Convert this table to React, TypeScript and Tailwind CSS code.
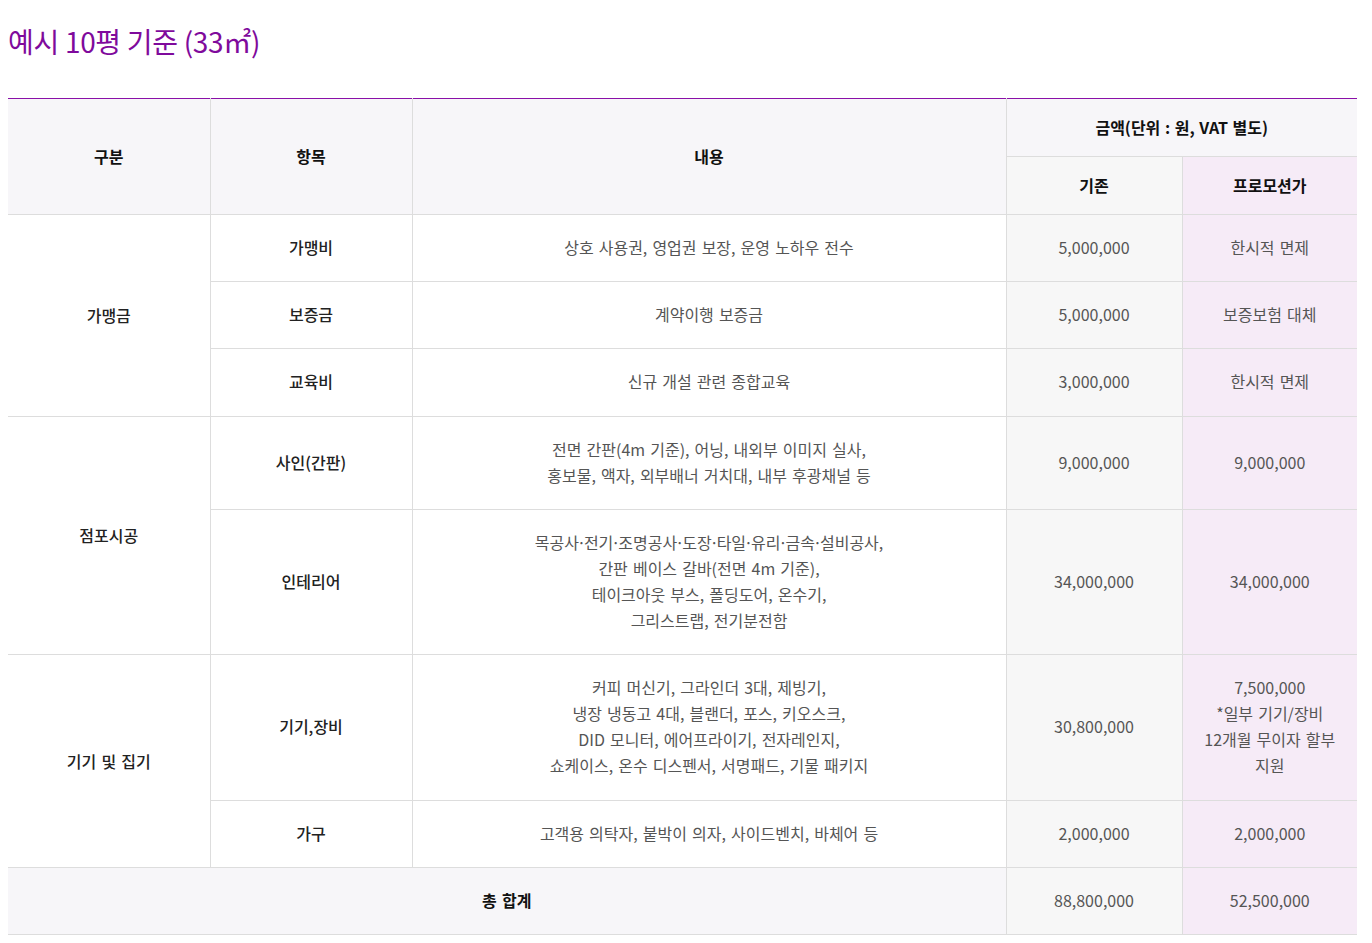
const font = { fontFamily: '"Noto Sans CJK KR", "Noto Sans", sans-serif' }

type Row = {
  group?: { label: string; span: number }
  item: string
  desc: string[]
  base: string
  promo: string[]
}

const rows: Row[] = [
  {
    group: { label: '가맹금', span: 3 },
    item: '가맹비',
    desc: ['상호 사용권, 영업권 보장, 운영 노하우 전수'],
    base: '5,000,000',
    promo: ['한시적 면제'],
  },
  {
    item: '보증금',
    desc: ['계약이행 보증금'],
    base: '5,000,000',
    promo: ['보증보험 대체'],
  },
  {
    item: '교육비',
    desc: ['신규 개설 관련 종합교육'],
    base: '3,000,000',
    promo: ['한시적 면제'],
  },
  {
    group: { label: '점포시공', span: 2 },
    item: '사인(간판)',
    desc: ['전면 간판(4m 기준), 어닝, 내외부 이미지 실사,', '홍보물, 액자, 외부배너 거치대, 내부 후광채널 등'],
    base: '9,000,000',
    promo: ['9,000,000'],
  },
  {
    item: '인테리어',
    desc: [
      '목공사·전기·조명공사·도장·타일·유리·금속·설비공사,',
      '간판 베이스 갈바(전면 4m 기준),',
      '테이크아웃 부스, 폴딩도어, 온수기,',
      '그리스트랩, 전기분전함',
    ],
    base: '34,000,000',
    promo: ['34,000,000'],
  },
  {
    group: { label: '기기 및 집기', span: 2 },
    item: '기기,장비',
    desc: [
      '커피 머신기, 그라인더 3대, 제빙기,',
      '냉장 냉동고 4대, 블랜더, 포스, 키오스크,',
      'DID 모니터, 에어프라이기, 전자레인지,',
      '쇼케이스, 온수 디스펜서, 서명패드, 기물 패키지',
    ],
    base: '30,800,000',
    promo: ['7,500,000', '*일부 기기/장비', '12개월 무이자 할부', '지원'],
  },
  {
    item: '가구',
    desc: ['고객용 의탁자, 붙박이 의자, 사이드벤치, 바체어 등'],
    base: '2,000,000',
    promo: ['2,000,000'],
  },
]

// middle dots render wide in the CJK font, pull them in a bit
const Line = ({ text }: { text: string }) => {
  const parts = text.split('·')
  return (
    <div>
      {parts.map((p, i) => (
        <span key={i}>
          {i > 0 && <span className="mx-[-2px]">·</span>}
          {p}
        </span>
      ))}
    </div>
  )
}

const Lines = ({ lines }: { lines: string[] }) => (
  <>
    {lines.map((l, i) => (
      <Line key={i} text={l} />
    ))}
  </>
)

const cell = 'border-b border-[#dddddd] pt-[19px] pb-[21.35px]'

export default function App() {
  return (
    <div className="bg-white min-h-screen" style={font}>
      <div className="ml-2 w-[1349px] pt-5">
        <h2 className="text-[28px] leading-[42px] text-[#7f0a9c] mb-9 tracking-[-0.3px]">예시 10평 기준 (33㎡)</h2>
        <table className="w-full border-collapse table-fixed text-[16px] leading-[26px] text-center border-t border-t-[#8a10a8] [word-spacing:1.5px]">
          <colgroup>
            <col className="w-[202px]" />
            <col className="w-[202px]" />
            <col className="w-[594px]" />
            <col className="w-[176px]" />
            <col className="w-[175px]" />
          </colgroup>
          <thead>
            <tr className="text-[#111] font-bold">
              <th rowSpan={2} className="bg-[#f7f6f9] border-b border-r border-[#dddddd]">구분</th>
              <th rowSpan={2} className="bg-[#f7f6f9] border-b border-r border-[#dddddd]">항목</th>
              <th rowSpan={2} className="bg-[#f7f6f9] border-b border-r border-[#dddddd]">내용</th>
              <th colSpan={2} className="bg-[#f7f6f9] border-b border-[#dddddd] h-[57.5px] [word-spacing:1px]">금액(단위 : 원, VAT 별도)</th>
            </tr>
            <tr className="text-[#111] font-bold">
              <th className="bg-[#f7f7f7] border-b border-r border-[#dddddd] h-[58px]">기존</th>
              <th className="bg-[#f6ebf7] border-b border-[#dddddd]">프로모션가</th>
            </tr>
          </thead>
          <tbody>
            {rows.map((r, i) => (
              <tr key={i}>
                {r.group && (
                  <td rowSpan={r.group.span} className="border-b border-r border-[#dddddd] text-[#222] font-medium">
                    {r.group.label}
                  </td>
                )}
                <td className={`${cell} border-r text-[#222] font-medium`}>{r.item}</td>
                <td className={`${cell} border-r text-[#555]`}>
                  <Lines lines={r.desc} />
                </td>
                <td className={`${cell} border-r text-[#555] bg-[#f7f7f7]`}>{r.base}</td>
                <td className={`${cell} text-[#555] bg-[#f6ebf7]`}>
                  <Lines lines={r.promo} />
                </td>
              </tr>
            ))}
            <tr>
              <td colSpan={3} className={`${cell} border-r bg-[#f7f6f9] text-[#111] font-bold`}>총 합계</td>
              <td className={`${cell} border-r text-[#555] bg-[#f7f7f7]`}>88,800,000</td>
              <td className={`${cell} text-[#555] bg-[#f6ebf7]`}>52,500,000</td>
            </tr>
          </tbody>
        </table>
      </div>
    </div>
  )
}
